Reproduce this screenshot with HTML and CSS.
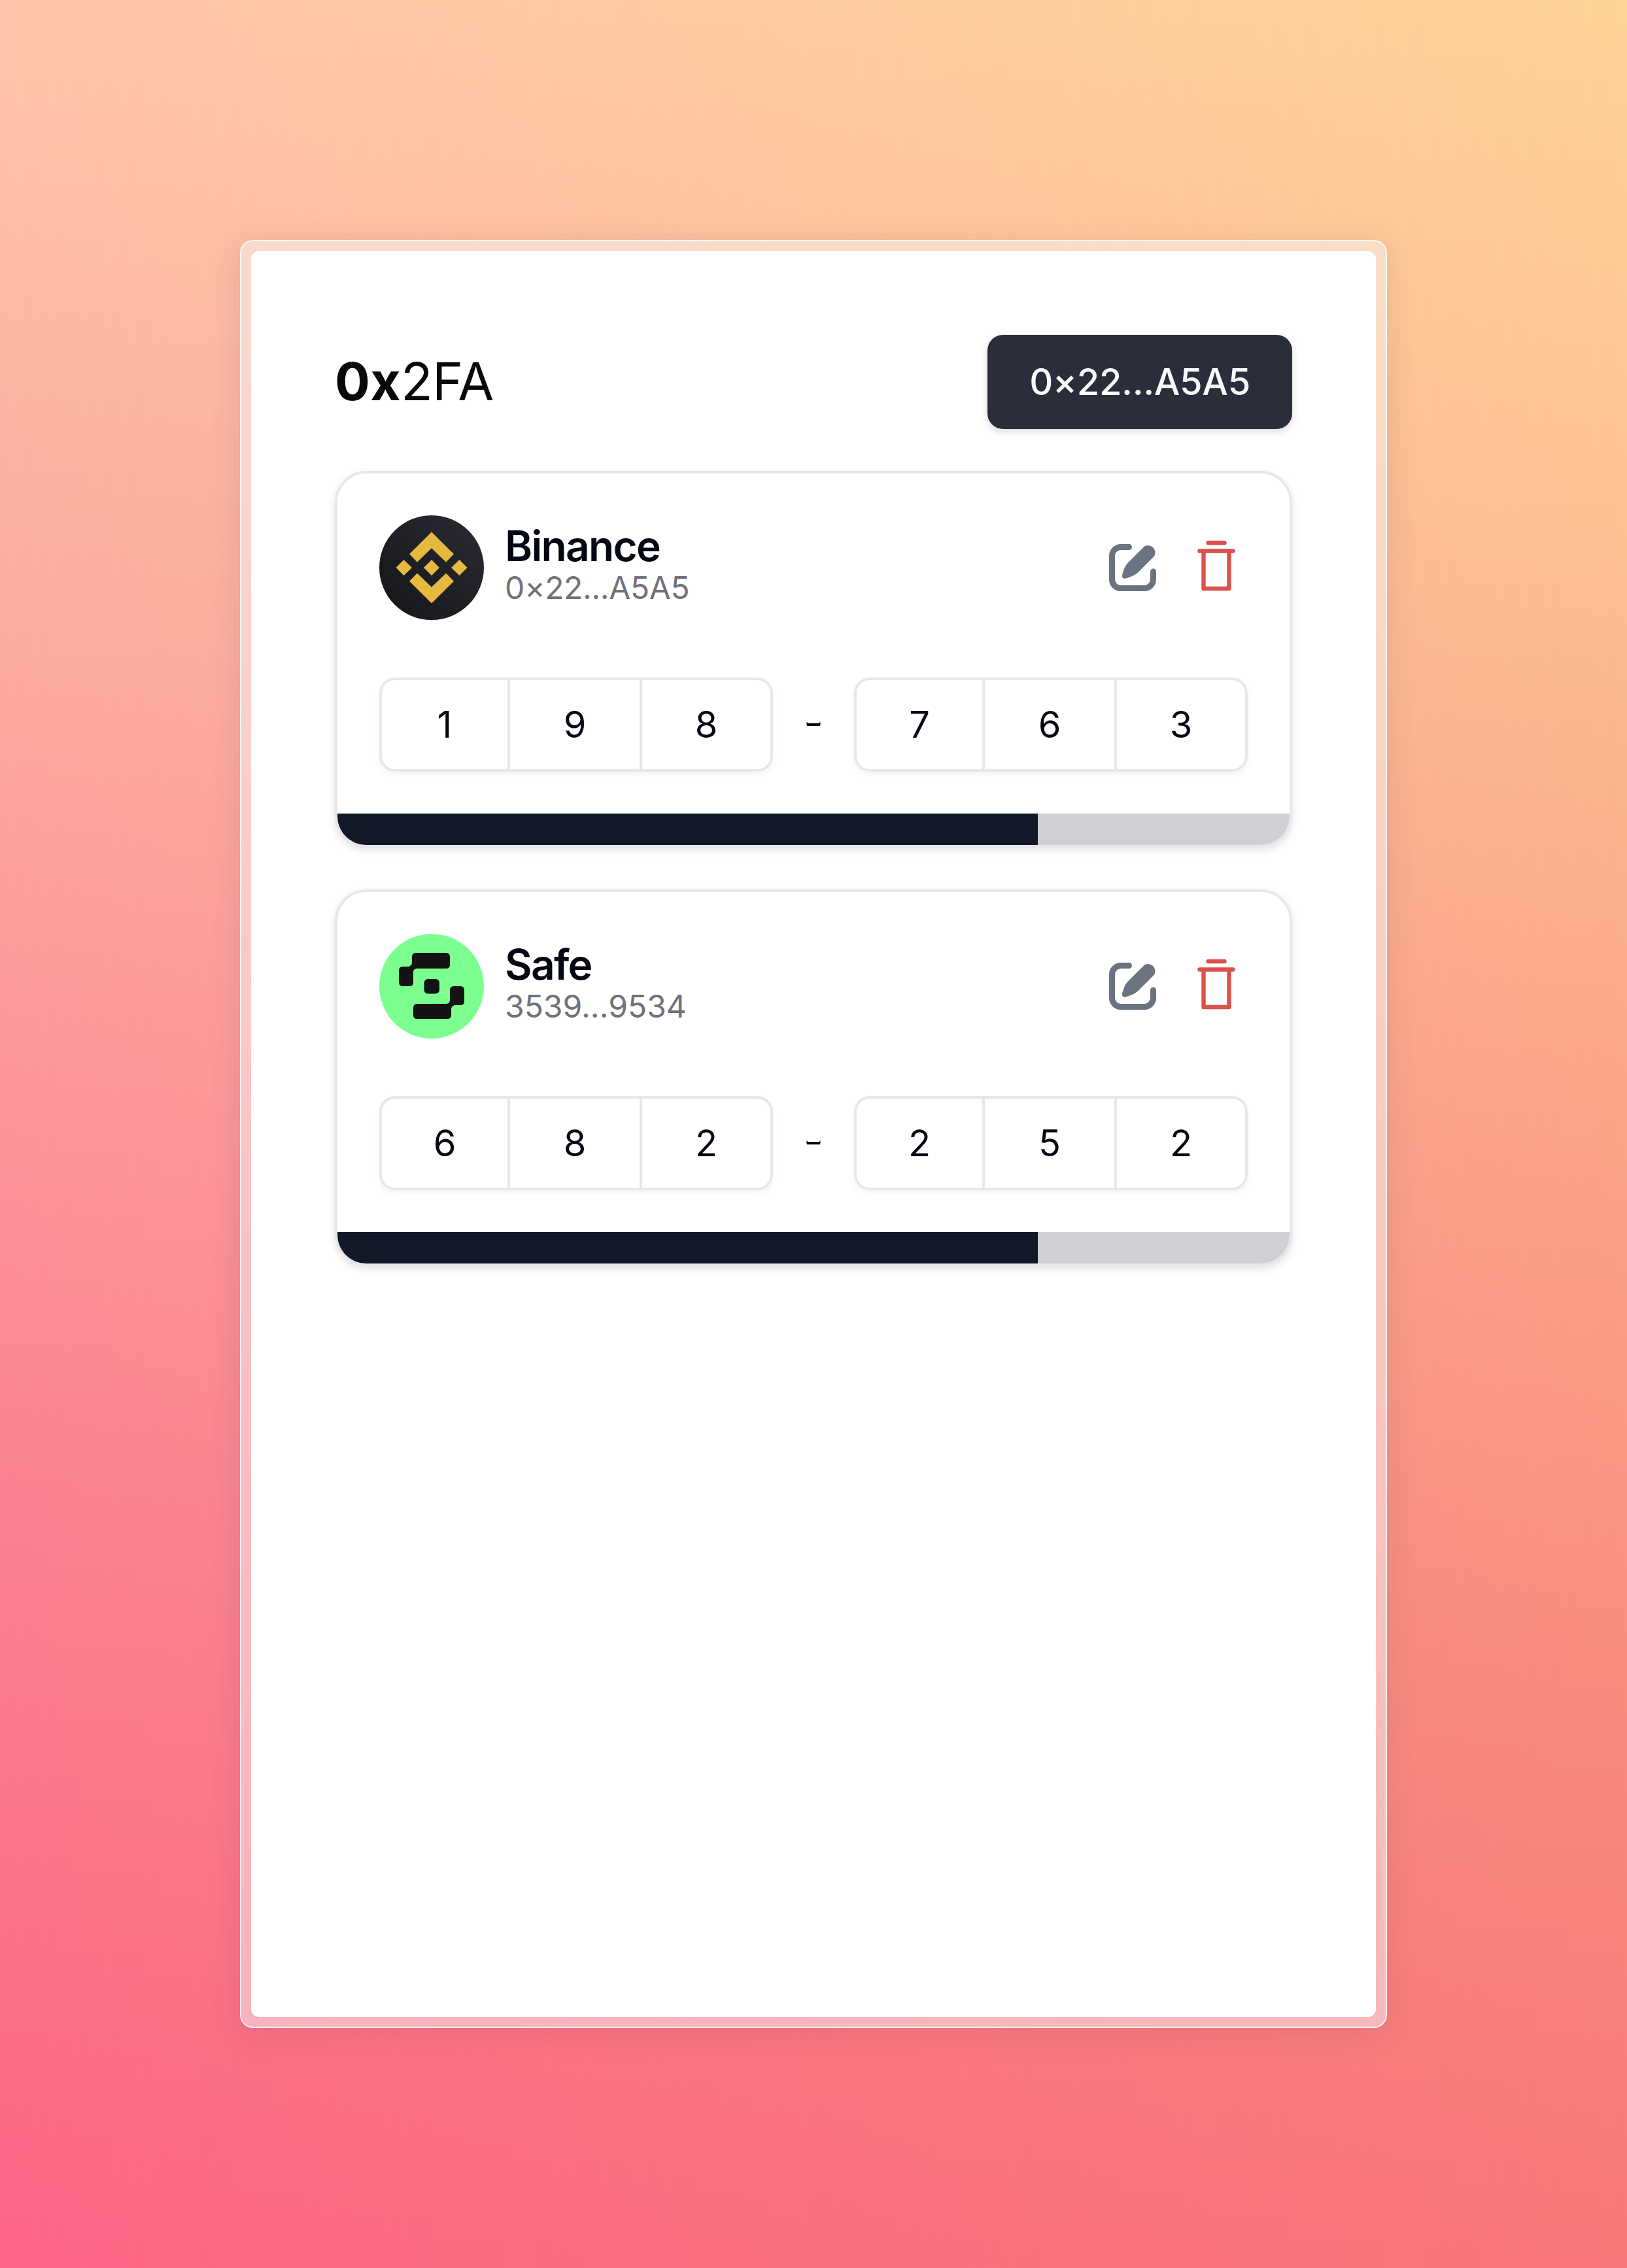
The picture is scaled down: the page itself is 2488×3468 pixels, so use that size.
FILE: index.html
```html
<!DOCTYPE html>
<html lang="en">
<head>
<meta charset="utf-8">
<title>0x2FA</title>
<link rel="stylesheet" href="styles.css">
</head>
<body>
<svg class="defs" aria-hidden="true">
  <defs>
    <linearGradient id="coin" x1="1" y1="0" x2="0" y2="1">
      <stop offset="0" stop-color="#2b2c33"/>
      <stop offset="1" stop-color="#14151a"/>
    </linearGradient>
    <symbol id="edit" viewBox="0 0 72 72">
      <path d="M30.5 4.500H18A13.500 13.500 0 0 0 4.500 18V54A13.500 13.500 0 0 0 18 67.500H54A13.500 13.500 0 0 0 67.500 54V42" fill="none" stroke="currentColor" stroke-width="9" stroke-linecap="round"/>
      <path d="M54 3.500A11 11 0 0 1 69 18.500L44 43.500C38 48.500 32 50.500 25 52.500A4 4 0 0 1 20 47.500C22 40 24 34 28.500 29Z" fill="currentColor"/>
    </symbol>
    <symbol id="trash" viewBox="0 0 60 80">
      <g fill="none" stroke="currentColor" stroke-width="6.400" stroke-linecap="round" stroke-linejoin="round">
        <path d="M17.500 4H42.500M4.500 16.500H55.500"/>
        <path d="M10.500 17V74H49.500V17"/>
      </g>
    </symbol>
    <symbol id="dash" viewBox="0 0 15 15">
      <path d="M4.850 6.600H5.200V7H9.800V6.600H10.150V7.250L10 8H5L4.850 7.250Z" fill="currentColor"/>
    </symbol>
  </defs>
</svg>
<div class="frame">
  <main class="app">
    <header class="topbar">
      <h1 class="brand"><b>0x</b>2FA</h1>
      <button class="wallet">0×22...A5A5</button>
    </header>

    <section class="card">
      <div class="card-body">
        <div class="account">
          <svg class="avatar" viewBox="0 0 160 160">
            <circle cx="80" cy="80" r="80" fill="url(#coin)"/>
            <g fill="#e6ba41">
              <path d="M80 25.500L114 59.300L102 71.500L80 50.300L58 71.500L46 59.300Z"/>
              <path d="M80 134.500L114 100.700L102 88.500L80 109.700L58 88.500L46 100.700Z"/>
              <path d="M80 68L92 80L80 92L68 80ZM37.500 68L50 80L37.500 92L25.500 80ZM122.500 68L134.500 80L122.500 92L110 80Z"/>
            </g>
          </svg>
          <div class="names">
            <h2 class="name">Binance</h2>
            <p class="address hex">0×22...A5A5</p>
          </div>
          <div class="actions">
            <svg class="edit"><use href="#edit"/></svg>
            <svg class="trash"><use href="#trash"/></svg>
          </div>
        </div>
        <div class="code">
          <div class="digits"><span>1</span><span>9</span><span>8</span></div>
          <svg class="dash"><use href="#dash"/></svg>
          <div class="digits"><span>7</span><span>6</span><span>3</span></div>
        </div>
      </div>
      <div class="timer"><div class="elapsed" style="width:73.560%"></div></div>
    </section>

    <section class="card">
      <div class="card-body">
        <div class="account">
          <svg class="avatar" viewBox="0 0 160 160">
            <circle cx="80" cy="80" r="80" fill="#7bff8e"/>
            <g fill="#121312">
              <path d="M56 29H102Q108 29 108 35V47Q108 53 102 53H57Q52 54 52 58V74Q52 80 46 80H36Q30 80 30 74V56Q30 50 36 50H45Q50 48 50 44V35Q50 29 56 29Z"/>
              <path d="M104 130H58Q52 130 52 124V113Q52 107 58 107H103Q108 106 108 101V86Q108 80 114 80H124Q130 80 130 86V103Q130 109 124 109H115Q110 111 110 115V124Q110 130 104 130Z"/>
              <rect x="68.500" y="69" width="23.500" height="22.500" rx="6"/>
            </g>
          </svg>
          <div class="names">
            <h2 class="name">Safe</h2>
            <p class="address">3539...9534</p>
          </div>
          <div class="actions">
            <svg class="edit"><use href="#edit"/></svg>
            <svg class="trash"><use href="#trash"/></svg>
          </div>
        </div>
        <div class="code">
          <div class="digits"><span>6</span><span>8</span><span>2</span></div>
          <svg class="dash"><use href="#dash"/></svg>
          <div class="digits"><span>2</span><span>5</span><span>2</span></div>
        </div>
      </div>
      <div class="timer"><div class="elapsed" style="width:73.560%"></div></div>
    </section>
  </main>
</div>
</body>
</html>
```
FILE: styles.css
```css
* { box-sizing: border-box; margin: 0; padding: 0; }

body {
  position: relative;
  isolation: isolate;
  width: 2488px;
  height: 3468px;
  display: flex;
  align-items: center;
  justify-content: center;
  font-family: Inter, sans-serif;
  color: #030712;
  background: linear-gradient(to bottom, #fed497 0%, #fdbd92 27%, #faa488 51%, #f88f80 72%, #f8777a 100%);
}

/* pink side of the backdrop, fading out towards the right */
body::before {
  content: "";
  position: absolute;
  inset: 0;
  z-index: -1;
  background: linear-gradient(to bottom, #ffc4ab 0%, #fcaba1 29%, #fb959b 48%, #fb8093 68%, #fb7089 86%, #fe6487 100%);
  -webkit-mask-image: linear-gradient(to right, #000, transparent);
  mask-image: linear-gradient(to right, #000, transparent);
}

.defs { position: absolute; width: 0; height: 0; }

.frame {
  width: 1754px;
  height: 2734px;
  padding: 15px;
  border: 2px solid rgba(255, 255, 255, 0.75);
  border-radius: 20px;
  background: rgba(246, 246, 246, 0.5);
  box-shadow: 0 8px 48px rgba(60, 60, 60, 0.12);
}

.app {
  height: 100%;
  padding: 128px;
  border-radius: 12px;
  background: #fff;
  display: flex;
  flex-direction: column;
  gap: 64px;
}

.topbar { display: flex; align-items: center; justify-content: space-between; }

.brand {
  padding-bottom: 2px;
  font-size: 80px;
  line-height: 112px;
  font-weight: 400;
  letter-spacing: -0.700px;
  color: #09090b;
}
.brand b { font-weight: 700; letter-spacing: 0.300px; }

.wallet {
  width: 466px;
  height: 144px;
  border: 0;
  border-radius: 24px;
  background: #2a2d3a;
  color: #f9fafb;
  font: 500 56px/80px Inter, sans-serif;
  letter-spacing: -0.400px;
  white-space: nowrap;
  box-shadow: 0 4px 12px rgba(0, 0, 0, 0.15);
}

.card {
  height: 576px;
  border: 4px solid #e5e7eb;
  border-radius: 48px;
  overflow: hidden;
  display: flex;
  flex-direction: column;
  box-shadow: 0 4px 12px rgba(0, 0, 0, 0.12);
}

.card-body {
  flex: 1;
  padding: 64px;
  display: flex;
  flex-direction: column;
  gap: 88px;
}

.account { display: flex; align-items: center; gap: 32px; }
.avatar { width: 160px; height: 160px; }
.names { flex: 1; padding-bottom: 3px; }
.name { font-size: 64px; line-height: 64px; font-weight: 600; letter-spacing: -1.700px; }
.address { font-size: 48px; line-height: 64px; color: #71717a; }
.hex { letter-spacing: -0.400px; }

.actions { display: flex; align-items: center; gap: 62px; padding-right: 18px; }
.edit { width: 72px; height: 72px; color: #6b7280; }
.trash { width: 60px; height: 80px; color: #dc514c; margin-top: -4px; }

.code { display: flex; align-items: center; gap: 32px; }
.dash { width: 60px; height: 60px; }
.digits {
  display: grid;
  grid-template-columns: 196px 202px 196px;
  height: 144px;
  border: 4px solid #e5e7eb;
  border-radius: 24px;
  box-shadow: 0 4px 8px rgba(0, 0, 0, 0.05);
}
.digits span {
  display: flex;
  align-items: center;
  justify-content: center;
  font-size: 56px;
  line-height: 80px;
  border-right: 4px solid #e5e7eb;
}
.digits span:last-child { border-right: 0; }

.timer { height: 48px; background: #cfd0d4; }
.elapsed { height: 100%; background: #111827; }
```
